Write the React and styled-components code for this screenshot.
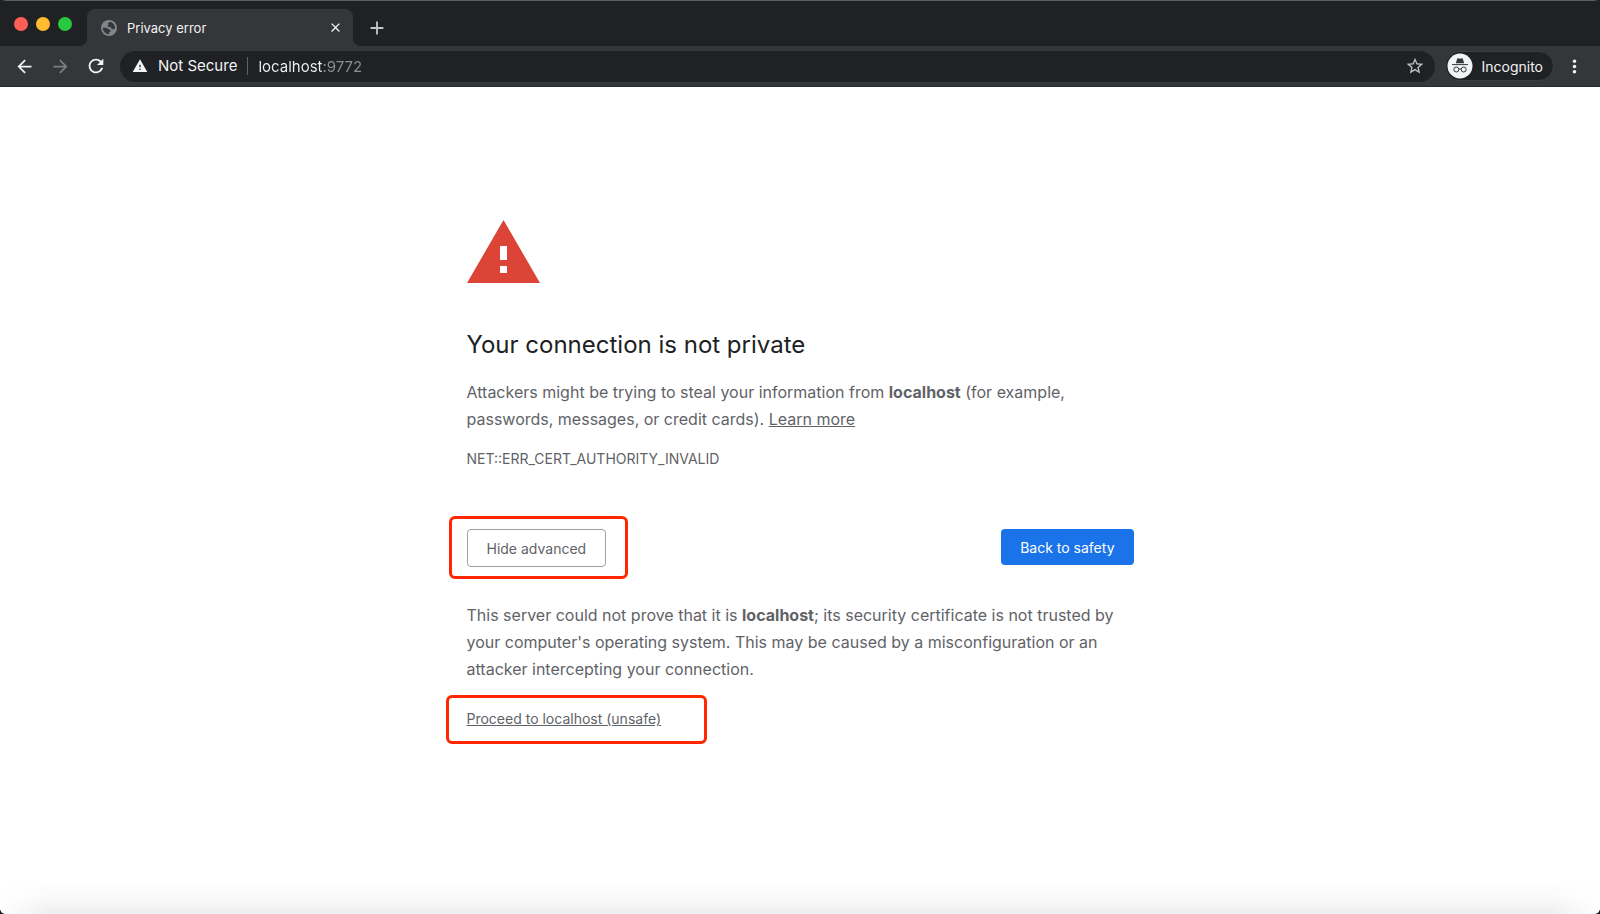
import React from "react";
import styled, { createGlobalStyle } from "styled-components";
import {
  MdAdd,
  MdArrowBack,
  MdArrowForward,
  MdClose,
  MdMoreVert,
  MdRefresh,
  MdStarOutline,
  MdWarning,
} from "react-icons/md";

const GlobalStyle = createGlobalStyle`
  * {
    box-sizing: border-box;
  }

  body {
    margin: 0;
    background-color: #202124;
    font-family: Inter, "Liberation Sans", sans-serif;
  }

  button,
  input {
    font-family: inherit;
  }
`;

const Window = styled.div`
  min-height: 100vh;
  display: flex;
  flex-direction: column;
  border-radius: 6px;
  overflow: hidden;
`;

const TabStrip = styled.header`
  height: 46px;
  display: flex;
  align-items: flex-end;
  background-color: #202124;
  border-top: 1px solid #5c5f62;
`;

const TrafficLights = styled.div`
  width: 87px;
  height: 45px;
  padding-left: 14px;
  display: flex;
  align-items: center;
  gap: 8px;
`;

const Light = styled.button`
  width: 14px;
  height: 14px;
  padding: 0;
  border: none;
  border-radius: 50%;
  background-color: ${(props) => props.$color};
`;

const Tab = styled.div`
  position: relative;
  width: 266px;
  height: 37px;
  padding: 0 10px 0 14px;
  display: flex;
  align-items: center;
  gap: 10px;
  border-radius: 8px 8px 0 0;
  background-color: #35363a;
  color: #9aa0a6;

  &::before,
  &::after {
    content: "";
    position: absolute;
    bottom: 0;
    width: 8px;
    height: 8px;
  }

  &::before {
    right: 100%;
    background: radial-gradient(circle at 0 0, transparent 8px, #35363a 8px);
  }

  &::after {
    left: 100%;
    background: radial-gradient(circle at 100% 0, transparent 8px, #35363a 8px);
  }
`;

const TabTitle = styled.span`
  flex: 1;
  font-size: 13px;
  color: #f1f3f4;
`;

const IconButton = styled.button`
  width: ${(props) => props.$width || 36}px;
  height: 36px;
  padding: 0;
  display: flex;
  align-items: center;
  justify-content: center;
  flex-shrink: 0;
  border: none;
  background: none;
  color: ${(props) => props.$color || "#f1f3f4"};
`;

const Toolbar = styled.nav`
  height: 41px;
  padding: 0 6px;
  display: flex;
  align-items: center;
  background-color: #35363a;
  border-bottom: 1px solid #27282b;
`;

const Omnibox = styled.div`
  flex: 1;
  height: 31px;
  margin: 0 10px 0 6px;
  padding-left: 12px;
  display: flex;
  align-items: center;
  border-radius: 16px;
  background-color: #202124;
`;

const Security = styled.button`
  padding: 0 10px 0 0;
  display: flex;
  align-items: center;
  gap: 10px;
  border: none;
  border-right: 1px solid #5f6368;
  background: none;
  color: #f1f3f4;
  font-size: 15px;
  line-height: 18px;
`;

/* host is drawn bright, the port dimmed */
const Address = styled.input`
  flex: 1;
  min-width: 0;
  padding: 0 0 0 10px;
  border: none;
  outline: none;
  background: linear-gradient(to right, #f1f3f4 75px, #8b8f94 75px);
  background-clip: text;
  -webkit-text-fill-color: transparent;
  color: #f1f3f4;
  font-size: 15px;
`;

const Profile = styled.button`
  height: 30px;
  padding: 0 10px 0 1px;
  display: flex;
  align-items: center;
  gap: 8px;
  border: 1px solid #3c3d41;
  border-radius: 15px;
  background-color: #202124;
  color: #f1f3f4;
  font-size: 14px;
`;

/* soft shade along the bottom edge, fading out at both corners */
const Page = styled.main`
  flex: 1;
  padding: 133px 24px 48px;
  background: linear-gradient(
      to right,
      #fff,
      transparent 48px,
      transparent calc(100% - 48px),
      #fff
    ),
    linear-gradient(to top, #eee, #fafafa 16px, #fff 36px);
`;

const Interstitial = styled.div`
  max-width: 667px;
  margin: 0 auto;
  color: #5f6368;
`;

const WarningSign = styled.svg`
  display: block;
  width: 73px;
  height: 63px;
`;

const Title = styled.h1`
  margin: 46px 0 18px;
  color: #202124;
  font-size: 24px;
  font-weight: 400;
  line-height: 32px;
`;

const Text = styled.p`
  margin: 0;
  font-size: 16px;
  line-height: 27px;
`;

const Link = styled.a`
  color: #5f6368;
  text-decoration: underline;
`;

const ErrorCode = styled.div`
  margin-top: 16px;
  font-size: 14px;
  line-height: 20px;
`;

const Actions = styled.div`
  margin: 60px 0 35px;
  display: flex;
  align-items: flex-start;
  justify-content: space-between;
`;

const Marked = styled.div`
  position: relative;
  width: fit-content;

  &::after {
    content: "";
    position: absolute;
    inset: ${(props) => props.$inset};
    border: 3px solid #ff2600;
    border-radius: 6px;
    pointer-events: none;
  }
`;

const Button = styled.button`
  height: ${(props) => (props.$primary ? 36 : 38)}px;
  padding: 0 19px;
  border: ${(props) => (props.$primary ? "none" : "1px solid #9aa0a6")};
  border-radius: 4px;
  background-color: ${(props) => (props.$primary ? "#1a73e8" : "#fff")};
  color: ${(props) => (props.$primary ? "#fff" : "#5f6368")};
  font-size: 14px;
`;

const Proceed = styled.div`
  margin-top: 26px;
  font-size: 14px;
  line-height: 20px;
`;

const GlobeIcon = () => (
  <svg width="16" height="16" viewBox="0 0 16 16" aria-hidden="true">
    <circle cx="8" cy="8" r="8" fill="#80868b" />
    <path
      d="M8.6 1.8 7 3.4l.6 1.5-1.2 1 .8 1.2 2.6.2 1 1.7 1.7.4 1.7-1.3A6.3 6.3 0 0 0 8.6 1.8z"
      fill="#35363a"
    />
    <path
      d="M1.7 7.8h4l1.6 1.5 2 .5.3 1.6-1.3.7-.2 2.1A6.3 6.3 0 0 1 1.7 7.8z"
      fill="#35363a"
    />
  </svg>
);

const IncognitoIcon = () => (
  <svg width="26" height="26" viewBox="0 0 26 26" aria-hidden="true">
    <circle cx="13" cy="13" r="12.5" fill="#f1f3f4" />
    <path d="M8.8 10.3 10.2 5.8q.2-.7.9-.5l1.9.4 1.9-.4q.7-.2.9.5l1.4 4.5z" fill="#35363a" />
    <path d="M5 11.6h16" stroke="#35363a" strokeWidth="1" />
    <g fill="none" stroke="#35363a" strokeWidth="1">
      <circle cx="9.3" cy="16.5" r="2.5" />
      <circle cx="16.7" cy="16.5" r="2.5" />
      <path d="M11.8 16.2q1.2-.6 2.4 0" />
    </g>
  </svg>
);

const lights = [
  { label: "Close window", color: "#ff5f57" },
  { label: "Minimize window", color: "#febc2e" },
  { label: "Zoom window", color: "#28c840" },
];

const App = () => {
  return (
    <Window>
      <GlobalStyle />
      <TabStrip>
        <TrafficLights>
          {lights.map((l) => (
            <Light key={l.label} $color={l.color} aria-label={l.label} />
          ))}
        </TrafficLights>
        <Tab>
          <GlobeIcon />
          <TabTitle>Privacy error</TabTitle>
          <IconButton $width={16} aria-label="Close tab">
            <MdClose size={15} />
          </IconButton>
        </Tab>
        <IconButton $width={48} $color="#c4c7ca" aria-label="New tab">
          <MdAdd size={22} />
        </IconButton>
      </TabStrip>
      <Toolbar>
        <IconButton aria-label="Back">
          <MdArrowBack size={21} />
        </IconButton>
        <IconButton $color="#7b7e82" aria-label="Forward">
          <MdArrowForward size={21} />
        </IconButton>
        <IconButton aria-label="Reload">
          <MdRefresh size={22} />
        </IconButton>
        <Omnibox>
          <Security>
            <MdWarning size={16} />
            Not Secure
          </Security>
          <Address aria-label="Address" defaultValue="localhost:9772" />
          <IconButton $width={40} $color="#bdc1c6" aria-label="Bookmark this tab">
            <MdStarOutline size={20} />
          </IconButton>
        </Omnibox>
        <Profile>
          <IncognitoIcon />
          Incognito
        </Profile>
        <IconButton $width={40} aria-label="Menu">
          <MdMoreVert size={21} />
        </IconButton>
      </Toolbar>
      <Page>
        <Interstitial>
          <WarningSign viewBox="0 0 73 63" role="img" aria-label="Warning">
            <path d="M36.5 0 73 63H0z" fill="#db4437" />
            <path d="M33 26h7v14h-7zM33 46h7v7h-7z" fill="#fff" />
          </WarningSign>
          <Title>Your connection is not private</Title>
          <Text>
            Attackers might be trying to steal your information from{" "}
            <strong>localhost</strong> (for example, passwords, messages, or
            credit cards). <Link href="#learn">Learn more</Link>
          </Text>
          <ErrorCode>NET::ERR_CERT_AUTHORITY_INVALID</ErrorCode>
          <Actions>
            <Marked $inset="-13px -22px -12px -18px">
              <Button>Hide advanced</Button>
            </Marked>
            <Button $primary>Back to safety</Button>
          </Actions>
          <Text>
            This server could not prove that it is <strong>localhost</strong>;
            its security certificate is not trusted by your computer's
            operating system. This may be caused by a misconfiguration or an
            attacker intercepting your connection.
          </Text>
          <Proceed>
            <Marked $inset="-14px -46px -15px -21px">
              <Link href="#proceed">Proceed to localhost (unsafe)</Link>
            </Marked>
          </Proceed>
        </Interstitial>
      </Page>
    </Window>
  );
};

export default App;
